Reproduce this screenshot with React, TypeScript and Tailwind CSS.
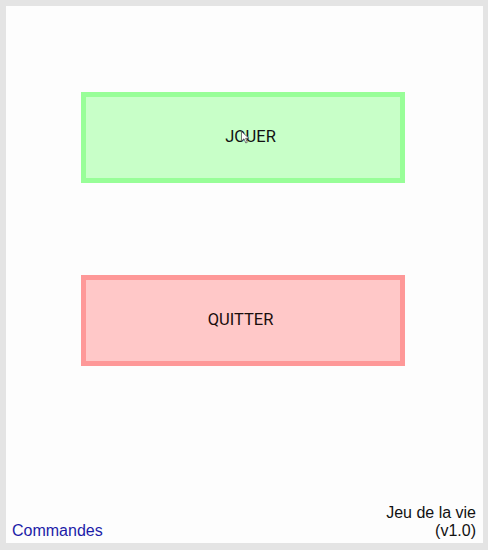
const Cursor = () => (
  <svg className="absolute left-[16px] top-[6px]" width="9" height="13" viewBox="0 0 9 13">
    <path d="M0.5 0.5 L0.5 10 L3 7.8 L4.8 12 L6.3 11.3 L4.6 7.3 L8 7.3 Z" fill="#fff" stroke="#555" strokeWidth="0.8" />
  </svg>
)

const App = () => {
  return (
    <div className="w-[488px] h-[550px] bg-[#e4e4e4] p-[6px] pr-[5px] pb-[7px] font-['Liberation_Sans',Arial,sans-serif]">
      <div className="w-full h-full bg-[#fdfdfd] flex flex-col">
        <div className="flex flex-col gap-[92px] pt-[86px] pl-[75px]">
          <button className="w-[324px] h-[91px] bg-[#c8ffc8] border-[5px] border-[#98fe98] flex items-center justify-center text-[16.5px] text-[#111] font-['Roboto',sans-serif]">
            <span className="relative ml-[15px]">
              JOUER
              <Cursor />
            </span>
          </button>
          <button className="w-[324px] h-[91px] bg-[#ffc8c8] border-[5px] border-[#fe9898] flex items-center justify-center text-[16.5px] text-[#1a0d0d] font-['Roboto',sans-serif]">
            <span className="mr-[5px]">QUITTER</span>
          </button>
        </div>
        <div className="mt-auto flex justify-between items-end pl-[6px] pr-[7px] pb-[3px] text-[16px] leading-[18px]">
          <span className="text-[#1c1ca8]">Commandes</span>
          <div className="text-right text-[#111]">
            <p>Jeu de la vie</p>
            <p>(v1.0)</p>
          </div>
        </div>
      </div>
    </div>
  )
}

export default App
